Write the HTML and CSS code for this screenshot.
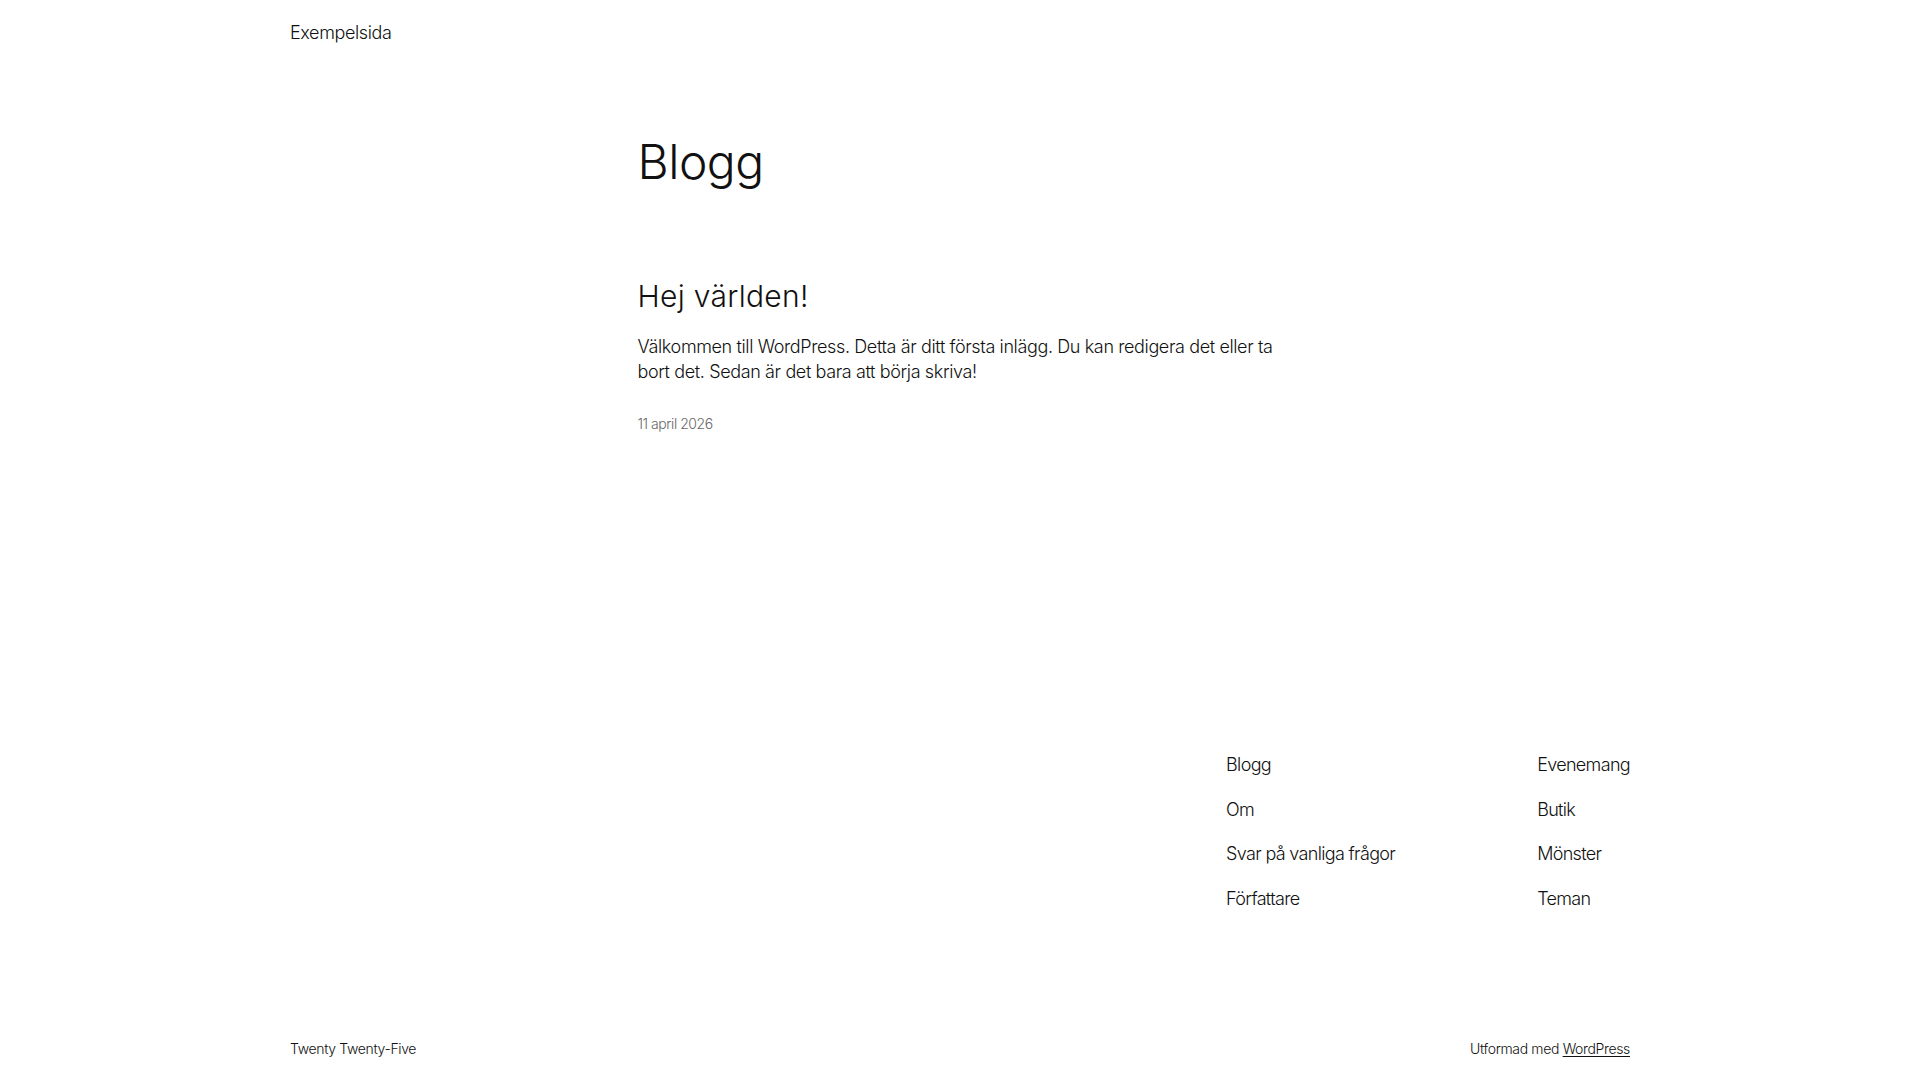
FILE: index.html
```html
<!DOCTYPE html>
<html lang="sv">
<head>
<meta charset="utf-8">
<title>Blogg – Exempelsida</title>
<link rel="stylesheet" href="styles.css">
</head>
<body>
<header class="site-header">
  <div class="wide">
    <a class="site-title" href="#">Exempelsida</a>
  </div>
</header>
<main class="content">
  <h1 class="page-title">Blogg</h1>
  <article class="post">
    <h2 class="post-title"><a href="#">Hej världen!</a></h2>
    <p class="excerpt">Välkommen till WordPress. Detta är ditt första inlägg. Du kan redigera det eller ta bort det. Sedan är det bara att börja skriva!</p>
    <div class="post-date">11 april 2026</div>
  </article>
</main>
<footer class="site-footer">
  <div class="wide">
    <div class="footer-top">
      <nav class="footer-nav">
        <ul class="nav-col">
          <li><a href="#">Blogg</a></li>
          <li><a href="#">Om</a></li>
          <li><a href="#">Svar på vanliga frågor</a></li>
          <li><a href="#">Författare</a></li>
        </ul>
        <ul class="nav-col">
          <li><a href="#">Evenemang</a></li>
          <li><a href="#">Butik</a></li>
          <li><a href="#">Mönster</a></li>
          <li><a href="#">Teman</a></li>
        </ul>
      </nav>
    </div>
    <div class="footer-bottom">
      <p>Twenty Twenty-Five</p>
      <p>Utformad med <a class="credit" href="#">WordPress</a></p>
    </div>
  </div>
</footer>
</body>
</html>
```
FILE: styles.css
```css
html, body {
  margin: 0;
  padding: 0;
  background: #ffffff;
}
body {
  font-family: Inter, "Noto Sans", sans-serif;
  font-weight: 300;
  color: #111111;
  font-size: 18px;
  line-height: 1.4;
  letter-spacing: -0.021em;
}
a {
  color: inherit;
  text-decoration: none;
}
.wide {
  max-width: 1340px;
  margin: 0 auto;
}
.site-header {
  padding: 20px 0;
}
.site-title {
  font-size: 18px;
}
.content {
  width: 645px;
  margin: 0 auto;
}
.page-title {
  margin: 70px 0 0;
  font-size: 48px;
  line-height: 1.125;
  font-weight: 300;
  letter-spacing: -0.5px;
}
.post {
  margin-top: 91px;
}
.post-title {
  margin: 0;
  font-size: 30px;
  line-height: 1.125;
  font-weight: 300;
  letter-spacing: 0.3px;
}
.excerpt {
  margin: 20px 0 0;
}
.post-date {
  margin-top: 30px;
  font-size: 14px;
  color: #686868;
  letter-spacing: -0.032em;
}
.site-footer {
  margin-top: 318px;
}
.footer-top {
  display: flex;
  justify-content: flex-end;
}
.footer-nav {
  display: flex;
  gap: 142px;
  letter-spacing: -0.037em;
}
.nav-col {
  list-style: none;
  margin: 0;
  padding: 0;
  display: flex;
  flex-direction: column;
  gap: 19.5px;
}
.footer-bottom {
  display: flex;
  justify-content: space-between;
  margin-top: 128px;
  font-size: 14px;
  letter-spacing: -0.025em;
}
.footer-bottom p {
  margin: 0;
}
.credit {
  text-decoration: underline;
  text-underline-offset: 2px;
}
```
